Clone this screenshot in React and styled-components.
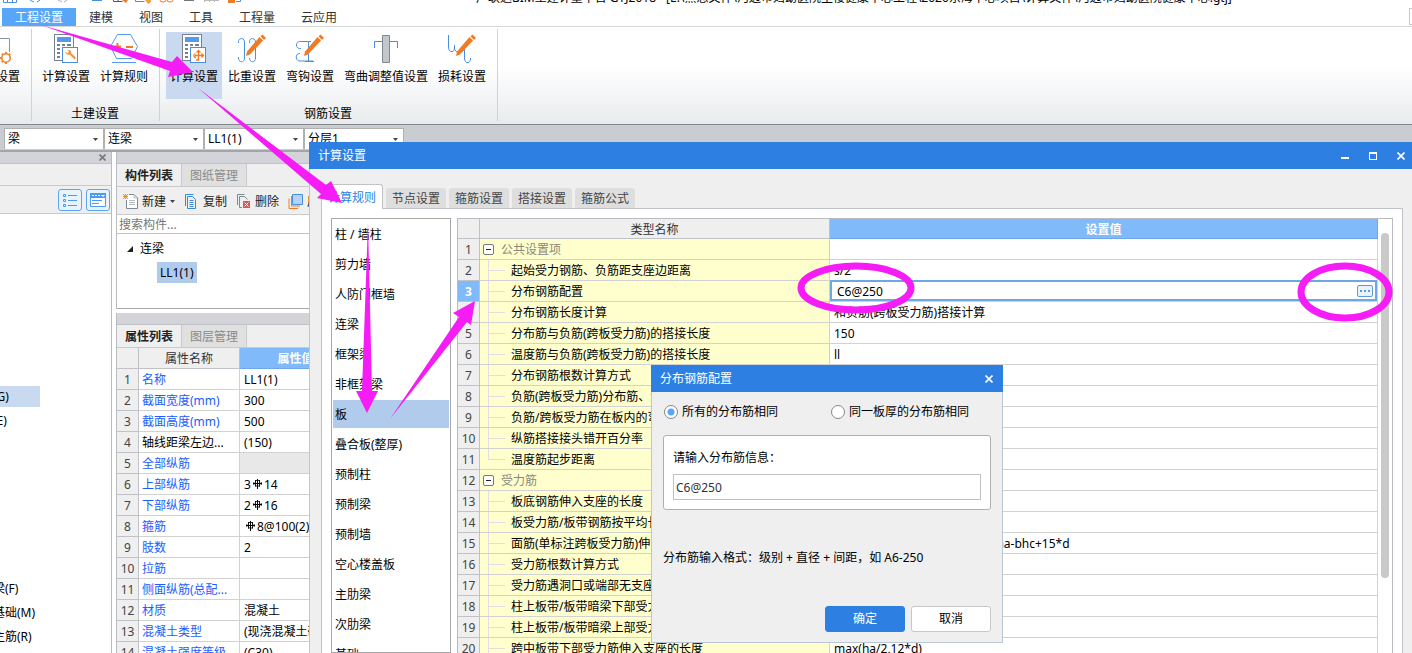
import React, { useState } from 'react';
import styled, { createGlobalStyle } from 'styled-components';

const MENUS = ['工程设置', '建模', '视图', '工具', '工程量', '云应用'];

const COMPONENT_TYPES = [
  '柱 / 墙柱', '剪力墙', '人防门框墙', '连梁', '框架梁', '非框架梁', '板', '叠合板(整厚)',
  '预制柱', '预制梁', '预制墙', '空心楼盖板', '主肋梁', '次肋梁', '基础',
];

const RULES = [
  { name: '公共设置项', group: true },
  { name: '起始受力钢筋、负筋距支座边距离', value: 's/2' },
  { name: '分布钢筋配置', value: 'C6@250', editing: true },
  { name: '分布钢筋长度计算', value: '和负筋(跨板受力筋)搭接计算' },
  { name: '分布筋与负筋(跨板受力筋)的搭接长度', value: '150' },
  { name: '温度筋与负筋(跨板受力筋)的搭接长度', value: 'll' },
  { name: '分布钢筋根数计算方式', value: '' },
  { name: '负筋(跨板受力筋)分布筋、温度筋是否带弯勾', value: '' },
  { name: '负筋/跨板受力筋在板内的弯折长度', value: '' },
  { name: '纵筋搭接接头错开百分率', value: '' },
  { name: '温度筋起步距离', value: '', last: true },
  { name: '受力筋', group: true },
  { name: '板底钢筋伸入支座的长度', value: '' },
  { name: '板受力筋/板带钢筋按平均长度计算', value: '' },
  { name: '面筋(单标注跨板受力筋)伸入支座的锚固长度', value: '能直锚就直锚,否则按公式计算:ha-bhc+15*d' },
  { name: '受力筋根数计算方式', value: '' },
  { name: '受力筋遇洞口或端部无支座时的弯折长度', value: '' },
  { name: '柱上板带/板带暗梁下部受力筋伸入支座的长度', value: '' },
  { name: '柱上板带/板带暗梁上部受力筋伸入支座的长度', value: '' },
  { name: '跨中板带下部受力筋伸入支座的长度', value: 'max(ha/2,12*d)' },
];

const PROPERTIES = [
  { name: '名称', value: 'LL1(1)' },
  { name: '截面宽度(mm)', value: '300' },
  { name: '截面高度(mm)', value: '500' },
  { name: '轴线距梁左边...', value: '(150)', plain: true },
  { name: '全部纵筋', value: '', disabled: true },
  { name: '上部纵筋', value: <>3<Rebar />14</> },
  { name: '下部纵筋', value: <>2<Rebar />16</> },
  { name: '箍筋', value: <><Rebar />8@100(2)</> },
  { name: '肢数', value: '2' },
  { name: '拉筋', value: '' },
  { name: '侧面纵筋(总配...', value: '' },
  { name: '材质', value: '混凝土' },
  { name: '混凝土类型', value: '(现浇混凝土碎石)' },
  { name: '混凝土强度等级', value: '(C30)' },
];

export default function App() {
  return (
    <>
      <GlobalStyle />
      <Page>
        <TitleBar>
          <QuickAccessIcons />
          <WindowTitle>
            广联达BIM土建计量平台 GTJ2018 - [E:\熊思文件\河边市妇幼医院主楼健康中心工程\2020东海中心项目\计算文件\河边市妇幼医院健康中心.gtj]
          </WindowTitle>
        </TitleBar>
        <MenuBar>
          {MENUS.map((menu, i) => <MenuTab key={menu} $active={i === 0}>{menu}</MenuTab>)}
          <MenuEdge />
        </MenuBar>
        <Ribbon />
        <ComboBar>
          <Combo label="构件类别" value="梁" />
          <Combo label="构件类型" value="连梁" />
          <Combo label="构件" value="LL1(1)" />
          <Combo label="分层" value="分层1" />
        </ComboBar>
        <Workspace>
          <NavigationPanel />
          <SidePanels>
            <ComponentPanel />
            <PropertyPanel />
          </SidePanels>
        </Workspace>
        <SettingsWindow />
        <Annotations />
      </Page>
    </>
  );
}

function Ribbon() {
  return (
    <RibbonBar>
      <RibbonGroup $clipped>
        <RibbonItems>
          <RibbonItem><PageGearIcon />比重设置</RibbonItem>
        </RibbonItems>
      </RibbonGroup>
      <RibbonGroup>
        <RibbonItems>
          <RibbonItem><CalculatorIcon badge="wrench" />计算设置</RibbonItem>
          <RibbonItem><HexagonIcon />计算规则</RibbonItem>
        </RibbonItems>
        <GroupLabel>土建设置</GroupLabel>
      </RibbonGroup>
      <RibbonGroup>
        <RibbonItems>
          <RibbonItem $active><CalculatorIcon badge="rebar" />计算设置</RibbonItem>
          <RibbonItem><WeightIcon />比重设置</RibbonItem>
          <RibbonItem><HookIcon />弯钩设置</RibbonItem>
          <RibbonItem><BendIcon />弯曲调整值设置</RibbonItem>
          <RibbonItem><LossIcon />损耗设置</RibbonItem>
        </RibbonItems>
        <GroupLabel>钢筋设置</GroupLabel>
      </RibbonGroup>
    </RibbonBar>
  );
}

function Combo({ label, value }) {
  return (
    <ComboBox>
      <ComboSelect aria-label={label} defaultValue={value}>
        <option>{value}</option>
      </ComboSelect>
      <Caret />
    </ComboBox>
  );
}

function NavigationPanel() {
  return (
    <NavPanel>
      <PanelGrip>
        <GripClose aria-label="关闭">
          <svg width="7" height="7" viewBox="0 0 7 7"><path d="M0.5 0.5l6 6M6.5 0.5l-6 6" stroke="#777" strokeWidth="1.6" /></svg>
        </GripClose>
      </PanelGrip>
      <NavSpacer />
      <NavTools>
        <NavToolButton aria-label="列表">
          <svg width="14" height="14" viewBox="0 0 14 14" fill="none" stroke="#4a9bf5">
            <path d="M5 2.5h9M5 7.5h9M5 12.5h9" />
            <path d="M0.5 1.5h2v2h-2zM0.5 6.5h2v2h-2zM0.5 11.5h2v2h-2z" />
          </svg>
        </NavToolButton>
        <NavToolButton aria-label="面板">
          <svg width="16" height="14" viewBox="0 0 16 14" fill="none">
            <path d="M0.5 0.5h15v13h-15z" fill="#fff" stroke="#4a9bf5" />
            <path d="M0 0h16v5H0z" fill="#4a9bf5" />
            <path d="M2 2.500h2M5 2.500h2M8 2.500h2" stroke="#fff" />
            <path d="M11 2h4l-2 2z" fill="#fff" />
            <path d="M2 7.500h10M2 10.500h7" stroke="#4a9bf5" />
          </svg>
        </NavToolButton>
      </NavTools>
      <NavTree>
        <NavItem $selected>(G)</NavItem>
        <NavItem>(E)</NavItem>
      </NavTree>
      <NavTree $lower>
        <NavItem>梁(F)</NavItem>
        <NavItem>基础(M)</NavItem>
        <NavItem>主筋(R)</NavItem>
      </NavTree>
    </NavPanel>
  );
}

function ComponentPanel() {
  return (
    <Panel>
      <PanelGrip />
      <PanelTabs>
        <PanelTab $active>构件列表</PanelTab>
        <PanelTab>图纸管理</PanelTab>
      </PanelTabs>
      <Toolbar>
        <ToolButton><NewIcon />新建<Caret /></ToolButton>
        <ToolButton><CopyIcon />复制</ToolButton>
        <ToolButton><DeleteIcon />删除</ToolButton>
        <ToolButton><LayersIcon />层间复制</ToolButton>
      </Toolbar>
      <SearchInput aria-label="搜索构件" placeholder="搜索构件..." />
      <ComponentTree>
        <TreeParent>
          <svg width="6" height="6" viewBox="0 0 6 6"><path d="M6 0v6H0z" fill="#222" /></svg>
          连梁
        </TreeParent>
        <TreeChild>LL1(1)</TreeChild>
      </ComponentTree>
    </Panel>
  );
}

function PropertyPanel() {
  return (
    <Panel>
      <PanelGrip />
      <PanelTabs>
        <PanelTab $active>属性列表</PanelTab>
        <PanelTab>图层管理</PanelTab>
      </PanelTabs>
      <Table>
        <colgroup>
          <IndexCol />
          <PropertyCol />
          <col />
        </colgroup>
        <thead>
          <tr>
            <HeadCell $tall />
            <HeadCell $tall>属性名称</HeadCell>
            <HeadCell $tall $active>属性值</HeadCell>
          </tr>
        </thead>
        <tbody>
          {PROPERTIES.map((item, i) => (
            <tr key={item.name}>
              <IndexCell>{i + 1}</IndexCell>
              <PropertyName $plain={item.plain}>{item.name}</PropertyName>
              <ValueCell $disabled={item.disabled}>{item.value}</ValueCell>
            </tr>
          ))}
        </tbody>
      </Table>
    </Panel>
  );
}

function SettingsWindow() {
  return (
    <Window>
      <WindowBar>
        计算设置
        <WindowControls>
          <ControlButton aria-label="最小化">
            <svg width="8" height="8" viewBox="0 0 8 8"><path d="M0 5h8v2H0z" fill="#fff" /></svg>
          </ControlButton>
          <ControlButton aria-label="最大化">
            <svg width="8" height="8" viewBox="0 0 8 8"><path d="M0 0h8v8H0zM1 2v5h6V2z" fill="#fff" fillRule="evenodd" /></svg>
          </ControlButton>
          <ControlButton aria-label="关闭"><CloseGlyph /></ControlButton>
        </WindowControls>
      </WindowBar>
      <WindowBody>
        <WindowTabs>
          <WindowTab $active>计算规则</WindowTab>
          <WindowTab>节点设置</WindowTab>
          <WindowTab>箍筋设置</WindowTab>
          <WindowTab>搭接设置</WindowTab>
          <WindowTab>箍筋公式</WindowTab>
        </WindowTabs>
        <TabPage>
          <TypeList>
            {COMPONENT_TYPES.map((type) => (
              <TypeItem key={type}>
                <TypeButton $selected={type === '板'}>{type}</TypeButton>
              </TypeItem>
            ))}
          </TypeList>
          <RuleTable />
        </TabPage>
      </WindowBody>
      <RebarDialog />
    </Window>
  );
}

function RuleTable() {
  return (
    <RuleFrame>
      <Table>
        <colgroup>
          <IndexCol />
          <RuleCol />
          <col />
        </colgroup>
        <thead>
          <tr>
            <HeadCell />
            <HeadCell>类型名称</HeadCell>
            <HeadCell $active>设置值</HeadCell>
          </tr>
        </thead>
        <tbody>
          {RULES.map((rule, i) => (
            <tr key={rule.name}>
              <IndexCell $active={rule.editing}>{i + 1}</IndexCell>
              <RuleName>
                <RuleNameInner $group={rule.group}>
                  {rule.group ? <GroupToggle /> : <Guide $last={rule.last} />}
                  <RuleText>{rule.name}</RuleText>
                </RuleNameInner>
              </RuleName>
              <ValueCell>
                {rule.editing ? (
                  <CellEditor>
                    <CellInput aria-label={rule.name} defaultValue={rule.value} />
                    <MoreButton aria-label="更多">
                      <svg width="10" height="2" viewBox="0 0 10 2"><path d="M0 0h2v2H0zM4 0h2v2H4zM8 0h2v2H8z" fill="#5a9be0" /></svg>
                    </MoreButton>
                  </CellEditor>
                ) : rule.value}
              </ValueCell>
            </tr>
          ))}
        </tbody>
      </Table>
      <ScrollTrack><ScrollThumb /></ScrollTrack>
    </RuleFrame>
  );
}

function GroupToggle() {
  return (
    <ToggleButton aria-label="折叠">
      <svg width="11" height="11" viewBox="0 0 11 11" fill="none">
        <rect x="0.5" y="0.5" width="10" height="10" rx="1.5" fill="#fff" stroke="#777" />
        <path d="M3 5.500h5" stroke="#222" />
      </svg>
    </ToggleButton>
  );
}

function RebarDialog() {
  const [mode, setMode] = useState('all');
  const [rebar, setRebar] = useState('C6@250');

  return (
    <Dialog role="dialog" aria-label="分布钢筋配置">
      <WindowBar $inset>
        分布钢筋配置
        <WindowControls>
          <ControlButton aria-label="关闭"><CloseGlyph /></ControlButton>
        </WindowControls>
      </WindowBar>
      <DialogBody>
        <RadioRow>
          <RadioLabel>
            <Radio type="radio" name="mode" checked={mode === 'all'} onChange={() => setMode('all')} />
            所有的分布筋相同
          </RadioLabel>
          <RadioLabel>
            <Radio type="radio" name="mode" checked={mode === 'thickness'} onChange={() => setMode('thickness')} />
            同一板厚的分布筋相同
          </RadioLabel>
        </RadioRow>
        <InputGroup>
          <label htmlFor="rebar">请输入分布筋信息：</label>
          <RebarInput id="rebar" value={rebar} onChange={(e) => setRebar(e.target.value)} />
        </InputGroup>
        <Hint>分布筋输入格式：级别 + 直径 + 间距，如 A6-250</Hint>
        <DialogActions>
          <ActionButton $primary>确定</ActionButton>
          <ActionButton>取消</ActionButton>
        </DialogActions>
      </DialogBody>
    </Dialog>
  );
}

function Annotations() {
  return (
    <AnnotationLayer width="1412" height="653" viewBox="0 0 1412 653" aria-hidden="true">
      <g fill="#f51cf5">
        <path d="M41 25L172 62L177 56L193 72L168 77L170 71Z" />
        <path d="M198 88L326 185L331 181L342 203L317 198L321 194Z" />
        <path d="M368 222L372 391H378L367 413L356 391H362Z" />
        <path d="M390 419L459 317L453 313L475 301L471 325L467 322Z" />
      </g>
      <g fill="none" stroke="#f51cf5" strokeWidth="7">
        <ellipse cx="856" cy="288" rx="55" ry="22" />
        <ellipse cx="1345" cy="292" rx="44" ry="26" />
      </g>
    </AnnotationLayer>
  );
}

/* icons */

function QuickAccessIcons() {
  return (
    <svg width="250" height="4" viewBox="0 0 250 4" fill="none">
      <path d="M3.500 0v2.500h13V0M7.500 0v2M12.500 0v2" stroke="#4a90d9" />
      <path d="M30 0l4 2M40 0l-3 2" stroke="#4a90d9" />
      <path d="M58 0l4 2M67 0l-3 2" stroke="#aaa" />
      <path d="M92 0h10v1H92z" fill="#4a90d9" />
      <path d="M113.500 0v1.500h9M118 0v1" stroke="#555" />
      <path d="M122 0h6l-2 3z" fill="#f07b26" />
      <path d="M135.500 0v1.500h9" stroke="#4a90d9" />
      <path d="M145 0h6v2l-3 2z" fill="#f5a13a" />
      <path d="M160 0a3 2 0 0 0 6 0M167 0a3 2 0 0 0 6 0" stroke="#f07b26" />
      <path d="M184 0h10v1h-10z" fill="#777" />
      <path d="M204.500 0v2M209.500 0v2M214.500 0v2M204 .5h15" stroke="#bbb" />
      <path d="M228 0h7v3h-7z" fill="#f07b26" />
      <path d="M236 1.500h4.500V0" stroke="#4a90d9" />
    </svg>
  );
}

function Caret() {
  return <svg width="5" height="3" viewBox="0 0 5 3"><path d="M0 0h5L2.500 3z" fill="#444" /></svg>;
}

function CloseGlyph() {
  return (
    <svg width="8" height="8" viewBox="0 0 8 8">
      <path d="M0.500 0.500l7 7M7.500 0.500l-7 7" stroke="#fff" strokeWidth="1.600" />
    </svg>
  );
}

function Rebar() {
  return (
    <RebarMark width="9" height="10" viewBox="0 0 9 10" fill="none" stroke="#000">
      <path d="M4.500 0v10M0 4.500h9" />
      <path d="M2.500 1v6.500M6.500 1v6.500" strokeWidth="0.9" />
      <path d="M2 1.500h5M2 7h5M0.800 3v3M8.200 3v3" strokeWidth="0.8" />
    </RebarMark>
  );
}

function Pencil() {
  return (
    <>
      <path d="M22.500 3l3.500 3.500L13 20.500l-4 1.500 1-4.500z" fill="#f07b26" />
      <path d="M23.500 2.200l2-1.700 3.500 3.500-2 2z" fill="#f07b26" />
    </>
  );
}

function PageGearIcon() {
  return (
    <svg width="30" height="30" viewBox="0 0 30 30" fill="none">
      <path d="M8.500 19V4.500h20V18M18.500 1v17" stroke="#8795a1" />
      <circle cx="25" cy="24" r="4.200" stroke="#f0852d" strokeWidth="1.600" />
      <path d="M25 18v2M25 28v2M19 24h2M29 24h1M20.800 19.800l1.300 1.300M29.200 19.800l-1.300 1.300M20.800 28.200l1.300-1.300" stroke="#f0852d" strokeWidth="2" />
    </svg>
  );
}

function CalculatorIcon({ badge }) {
  return (
    <svg width="30" height="30" viewBox="0 0 30 30" fill="none">
      <rect x="3.500" y="0.500" width="19" height="26" fill="#fff" stroke="#76838f" />
      <path d="M6 3h14v5H6z" fill="#5599e8" />
      <path d="M6 10h3v2H6zM11 10h3v2h-3zM16 10h4v2h-4zM6 14h3v2H6zM11 14h3v2h-3zM6 18h3v2H6zM6 22h3v2H6z" fill="#76838f" />
      <rect x="11.500" y="13.500" width="15" height="15" fill="#fff" stroke="#4a8fdd" />
      {badge === 'wrench' ? (
        <path d="M14.200 17.500l2.500 2 1.500-2.200-2-1c2.500-1 4.600.700 4 3l4.300 4c1 1-1 2.500-1.700 1.500l-4-4.300c-2.200.800-4.600-.600-4.600-3z" fill="#f5913a" />
      ) : (
        <path d="M19.500 16.500v9.500M17 26h3M16 21.500h8M17.500 18.500l2-2 2 2M16.500 19.500c-2.500 1-2 4 .500 4M22.500 19.500l2 2-2 2" stroke="#f07b26" strokeWidth="1.300" />
      )}
    </svg>
  );
}

function HexagonIcon() {
  return (
    <svg width="30" height="30" viewBox="0 0 30 30" fill="none">
      <path d="M8.500.500h13l7 12-6 12h-15l-6-12zM3 28.500h24" stroke="#5599e8" />
      <path d="M5 12.500h7M8.500 9v7M17 13h7" stroke="#f07b26" strokeWidth="2" />
    </svg>
  );
}

function WeightIcon() {
  return (
    <svg width="30" height="30" viewBox="0 0 30 30" fill="none">
      <path d="M1.500 9V7.500C1.500 3.500 7.500 3.500 7.500 8v16c0 5-6 5-6 0v-1M12.500 9V7.500c0-4 6-4 6 .500v16c0 5-6 5-6 0" stroke="#4a90d9" />
      <Pencil />
    </svg>
  );
}

function HookIcon() {
  return (
    <svg width="30" height="30" viewBox="0 0 30 30" fill="none">
      <path d="M16 7.500H4.500c-4 0-4 7 0 7H6M5 19.500c-5-.500-5 7.500 0 7.500h13M13.500 7v20M10 27.500h9" stroke="#4a90d9" />
      <Pencil />
    </svg>
  );
}

function BendIcon() {
  return (
    <svg width="30" height="30" viewBox="0 0 30 30" fill="none">
      <path d="M3.500 14V7.500h23V14" stroke="#4a8fdd" />
      <path d="M11.500 1.500h7v27h-7z" fill="#c4c7ca" stroke="#7d8994" />
    </svg>
  );
}

function LossIcon() {
  return (
    <svg width="30" height="30" viewBox="0 0 30 30" fill="none">
      <path d="M1.500 1v12c0 6 6 6 6 1v-3M7.500 14c0 5 7 6 10 1v9c0 6 6 6 6 1v-1" stroke="#4a90d9" />
      <Pencil />
    </svg>
  );
}

function NewIcon() {
  return (
    <svg width="15" height="15" viewBox="0 0 15 15" fill="none">
      <path d="M6 .500h5l3.500 3.500v10.500h-11V6" fill="#fff" stroke="#7d8994" />
      <path d="M11 .500V4h3M6 6.500h6M6 8.500h6M6 10.500h6" stroke="#b5bcc3" />
      <path d="M0 0l5 5M5 0L0 5M2.500 0v5M0 2.500h5" stroke="#f5961e" />
    </svg>
  );
}

function CopyIcon() {
  return (
    <svg width="15" height="15" viewBox="0 0 15 15" fill="none">
      <path d="M1.500 12V.500h8M3.500 2.500h5l3 3v9h-8z" stroke="#3d87d8" />
      <path d="M5.500 6.500h4M5.500 8.500h4M5.500 10.500h4M5.500 12.500h4" stroke="#3d87d8" />
    </svg>
  );
}

function DeleteIcon() {
  return (
    <svg width="15" height="15" viewBox="0 0 15 15" fill="none">
      <path d="M1.500 11V.500h7M6 13.500H3.500v-11h5l3 3" stroke="#7d8994" />
      <path d="M7 7h7v7H7z" fill="#d9534f" />
      <path d="M8.500 8.500l4 4M12.500 8.500l-4 4" stroke="#fff" />
    </svg>
  );
}

function LayersIcon() {
  return (
    <svg width="15" height="15" viewBox="0 0 15 15" fill="none">
      <path d="M1 4.500v10h9M3.500 2v10H12" stroke="#f07b26" />
      <path d="M4.500.500h10v10h-10z" fill="#b5d2f5" stroke="#4a8fdd" />
    </svg>
  );
}

/* styles */

const GlobalStyle = createGlobalStyle`
  * {
    box-sizing: border-box;
  }

  body {
    margin: 0;
  }

  body, button, input, select {
    font-family: 'Noto Sans', 'Noto Sans CJK SC', sans-serif;
    font-size: 12px;
    line-height: 16px;
    color: #000;
  }

  button {
    padding: 0;
    border: 0;
    background: none;
  }

  svg {
    flex-shrink: 0;
  }
`;

const Page = styled.div`
  position: relative;
  display: flex;
  flex-direction: column;
  height: 100vh;
  overflow: hidden;
  background: #fff;
  white-space: nowrap;
`;

const TitleBar = styled.header`
  display: flex;
  flex-shrink: 0;
  gap: 226px;
  height: 8px;
  overflow: hidden;
`;

const WindowTitle = styled.span`
  align-self: flex-end;
  padding-bottom: 2px;
`;

const MenuBar = styled.nav`
  display: flex;
  flex-shrink: 0;
  height: 19px;
  padding-left: 2px;
  border-bottom: 1px solid #d5d6d8;
`;

const MenuTab = styled.button`
  padding: 2px 13px 0;
  color: ${(props) => (props.$active ? '#fff' : '#333')};
  background: ${(props) => (props.$active ? '#58a6f8' : 'transparent')};
`;

const MenuEdge = styled.span`
  width: 3px;
  height: 17px;
  margin-left: auto;
  border: 1px solid #c8c8c8;
  border-right: 0;
`;

const RibbonBar = styled.div`
  display: flex;
  flex-shrink: 0;
  height: 98px;
  padding: 2px 0 3px;
  background: linear-gradient(#fff 40%, #e8ebed);
  border-bottom: 1px solid #85898e;
`;

const RibbonGroup = styled.section`
  display: flex;
  flex-direction: column;
  justify-content: space-between;
  align-items: ${(props) => (props.$clipped ? 'flex-end' : 'center')};
  width: ${(props) => (props.$clipped ? '32px' : 'auto')};
  padding: 3px 6px 0 5px;
  overflow: hidden;
  border-right: 1px solid #d0d2d5;
`;

const RibbonItems = styled.div`
  display: flex;
`;

const RibbonItem = styled.button`
  display: flex;
  flex-direction: column;
  align-items: center;
  gap: 5px;
  height: 67px;
  margin: 0 1px;
  padding: 2px 4px 0;
  background: ${(props) => (props.$active ? '#c9d9f0' : 'transparent')};
`;

const GroupLabel = styled.span`
  line-height: 14px;
`;

const ComboBar = styled.div`
  display: flex;
  flex-shrink: 0;
  height: 27px;
  padding: 3px 0 1px 4px;
  background: #c9ccd1;
  border-bottom: 2px solid #a2a5aa;
`;

const ComboBox = styled.div`
  position: relative;
  width: 100px;
  background: #fff;
  border: 1px solid #b0b0b0;
  border-bottom: 0;

  svg {
    position: absolute;
    right: 5px;
    top: 9px;
    pointer-events: none;
  }
`;

const ComboSelect = styled.select`
  appearance: none;
  width: 100%;
  height: 100%;
  padding: 0 3px;
  border: 0;
  background: transparent;
`;

const Workspace = styled.main`
  display: flex;
  flex: 1;
  gap: 4px;
  min-height: 0;
`;

const NavPanel = styled.aside`
  width: 112px;
  overflow: hidden;
  border-right: 1px solid #b8bbc0;
`;

const PanelGrip = styled.div`
  display: flex;
  align-items: center;
  justify-content: flex-end;
  height: 12px;
  padding-right: 5px;
  background: #d3d4d9;
  border-bottom: 1px solid #c0c2c7;
`;

const GripClose = styled.button`
  display: flex;
`;

const NavSpacer = styled.div`
  height: 22px;
  background: #efefef;
  border-bottom: 1px solid #c9cacd;
`;

const NavTools = styled.div`
  display: flex;
  align-items: center;
  justify-content: flex-end;
  gap: 4px;
  height: 28px;
  padding-right: 1px;
  background: #efefef;
  border-bottom: 1px solid #c9cacd;
`;

const NavToolButton = styled.button`
  display: flex;
  align-items: center;
  justify-content: center;
  width: 24px;
  height: 22px;
  border: 1px solid #58a6f8;
  border-radius: 3px;
  background: #e9f3fe;
`;

const NavTree = styled.ul`
  margin: ${(props) => (props.$lower ? '147px' : '172px')} 0 0;
  padding: 0;
  list-style: none;
`;

const NavItem = styled.li`
  width: 40px;
  height: 21px;
  margin-bottom: 3px;
  line-height: 21px;
  text-indent: -7px;
  background: ${(props) => (props.$selected ? '#c9d9f0' : 'transparent')};
`;

const SidePanels = styled.div`
  display: flex;
  flex-direction: column;
  gap: 4px;
  width: 236px;
`;

const Panel = styled.section`
  border-left: 1px solid #b8bbc0;
`;

const PanelTabs = styled.div`
  display: flex;
  height: 23px;
  background: #efefef;
  border-bottom: 1px solid #c9cacd;
`;

const PanelTab = styled.button`
  width: 65px;
  padding-top: 2px;
  color: ${(props) => (props.$active ? '#222' : '#8a8a8a')};
  font-weight: ${(props) => (props.$active ? 'bold' : 'normal')};
  background: ${(props) => (props.$active ? '#efefef' : '#e0e0e0')};
  border-right: 1px solid #c9cacd;
`;

const Toolbar = styled.div`
  display: flex;
  align-items: center;
  gap: 9px;
  height: 28px;
  padding: 2px 0 0 6px;
  overflow: hidden;
  background: #efefef;
  border-bottom: 1px solid #c9cacd;
`;

const ToolButton = styled.button`
  display: flex;
  align-items: center;
  gap: 4px;
  color: #222;
`;

const SearchInput = styled.input`
  display: block;
  width: 100%;
  height: 19px;
  padding: 0 2px;
  border: 0;
  border-bottom: 1px solid #c0c2c7;
  outline: 0;

  &::placeholder {
    color: #777;
  }
`;

const ComponentTree = styled.div`
  height: 75px;
  padding: 3px 0 0 10px;
  border-bottom: 1px solid #a8a8a8;
`;

const TreeParent = styled.div`
  display: flex;
  align-items: center;
  gap: 7px;
  height: 24px;
`;

const TreeChild = styled.span`
  display: inline-block;
  margin: 1px 0 0 30px;
  padding: 0 3px;
  line-height: 21px;
  background: #b0cbec;
`;

const Table = styled.table`
  flex: 1;
  width: 100%;
  table-layout: fixed;
  border-collapse: separate;
  border-spacing: 0;
`;

const IndexCol = styled.col`
  width: 22px;
`;

const PropertyCol = styled.col`
  width: 101px;
`;

const RuleCol = styled.col`
  width: 350px;
`;

const HeadCell = styled.th`
  height: ${(props) => (props.$tall ? '21px' : '20px')};
  padding: 2px 0 0;
  color: ${(props) => (props.$active ? '#fff' : '#333')};
  font-weight: ${(props) => (props.$active ? 'bold' : 'normal')};
  background: ${(props) => (props.$active ? '#81bafa' : '#efefef')};
  border: 0 solid ${(props) => (props.$active ? '#6ba8e5' : '#c0c2c7')};
  border-width: 0 1px 1px 0;
`;

const Cell = styled.td`
  height: 21px;
  padding: 2px 0 0;
  overflow: hidden;
  border-right: 1px solid #d2d2d2;
  border-bottom: 1px solid #d2d2d2;
`;

const IndexCell = styled(Cell)`
  text-align: center;
  color: ${(props) => (props.$active ? '#fff' : '#444')};
  font-weight: ${(props) => (props.$active ? 'bold' : 'normal')};
  background: ${(props) => (props.$active ? '#81bafa' : '#efefef')};
  border-color: #c0c2c7;
`;

const PropertyName = styled(Cell)`
  padding-left: 3px;
  color: ${(props) => (props.$plain ? '#000' : '#1a5cff')};
`;

const ValueCell = styled(Cell)`
  position: relative;
  padding-left: 4px;
  overflow: visible;
  background: ${(props) => (props.$disabled ? '#e8e8e8' : '#fff')};
`;

const RebarMark = styled.svg`
  margin: 0 2px;
`;

const Window = styled.section`
  position: absolute;
  inset: 142px 0 0 309px;
  display: flex;
  flex-direction: column;
  overflow: hidden;
  background: #efefef;
`;

const WindowBar = styled.header`
  display: flex;
  flex-shrink: 0;
  align-items: center;
  justify-content: space-between;
  height: 27px;
  padding: 0 ${(props) => (props.$inset ? '3px' : '0')} 0 9px;
  color: #fff;
  background: #2d7fe2;
`;

const WindowControls = styled.div`
  display: flex;
  gap: 6px;
`;

const ControlButton = styled.button`
  display: flex;
  align-items: center;
  justify-content: center;
  width: 22px;
  height: 27px;
`;

const WindowBody = styled.div`
  display: flex;
  flex: 1;
  flex-direction: column;
  min-height: 0;
  padding: 15px 9px 0 11px;
  border-left: 1px solid #bcc8d8;
`;

const WindowTabs = styled.div`
  display: flex;
  flex-shrink: 0;
  align-items: flex-end;
  gap: 3px;
  height: 25px;
`;

const WindowTab = styled.button`
  position: relative;
  width: ${(props) => (props.$active ? '62px' : '60px')};
  height: ${(props) => (props.$active ? '25px' : '20px')};
  margin-bottom: ${(props) => (props.$active ? '0' : '1px')};
  padding-top: 2px;
  color: ${(props) => (props.$active ? '#2d7fe2' : '#444')};
  background: ${(props) => (props.$active ? '#fff' : '#dedede')};
  border: ${(props) => (props.$active ? '1px solid #c0c2c7' : '0')};
  border-bottom: 0;
  border-radius: 3px 3px 0 0;
`;

const TabPage = styled.div`
  display: flex;
  flex: 1;
  gap: 6px;
  min-height: 0;
  margin-top: -1px;
  padding: 9px 9px 0;
  background: #fff;
  border: 1px solid #c0c2c7;
  border-bottom: 0;
`;

const TypeList = styled.ul`
  flex-shrink: 0;
  width: 120px;
  margin: 0;
  padding: 1px 1px 0;
  overflow: hidden;
  list-style: none;
  border: 1px solid #a8a8a8;
`;

const TypeItem = styled.li`
  height: 30px;
`;

const TypeButton = styled.button`
  width: 100%;
  height: 28px;
  padding: 2px 0 0 2px;
  text-align: left;
  background: ${(props) => (props.$selected ? '#b0cbec' : 'transparent')};
`;

const RuleFrame = styled.div`
  display: flex;
  flex: 1;
  align-items: flex-start;
  min-width: 0;
  overflow: hidden;
  border: 1px solid #b8bbc0;
  border-bottom: 0;
`;

const RuleName = styled(Cell)`
  padding: 0;
  background: #ffffce;
`;

const RuleNameInner = styled.div`
  display: flex;
  align-items: center;
  gap: ${(props) => (props.$group ? '7px' : '6px')};
  height: 20px;
  color: ${(props) => (props.$group ? '#8a8a7a' : '#000')};
`;

const RuleText = styled.span`
  padding-top: 2px;
`;

const ToggleButton = styled.button`
  display: flex;
  margin-left: 3px;
`;

const Guide = styled.span`
  flex-shrink: 0;
  width: 17px;
  height: 20px;
  margin-left: 8px;
  background:
    linear-gradient(#dedee4, #dedee4) 0 0 / 1px ${(props) => (props.$last ? '10px' : '20px')} no-repeat,
    linear-gradient(#dedee4, #dedee4) 0 10px / 17px 1px no-repeat;
`;

const CellEditor = styled.div`
  position: absolute;
  inset: -1px 0 0 0;
  display: flex;
  align-items: center;
  padding-right: 2px;
  background: #fff;
  border: 2px solid #6ba8e5;
`;

const CellInput = styled.input`
  flex: 1;
  min-width: 0;
  height: 17px;
  padding: 1px 5px 0;
  border: 0;
  outline: 0;
`;

const MoreButton = styled.button`
  display: flex;
  align-items: center;
  justify-content: center;
  width: 16px;
  height: 12px;
  border: 1px solid #5a9be0;
  border-radius: 2px;
  background: #e9f3fe;
`;

const ScrollTrack = styled.div`
  width: 14px;
  padding: 14px 3px 0;
`;

const ScrollThumb = styled.div`
  height: 345px;
  border-radius: 4px;
  background: #c9c9c9;
`;

const Dialog = styled.section`
  position: absolute;
  left: 342px;
  top: 223px;
  width: 352px;
  background: #efefef;
  box-shadow: inset 0 0 0 1px #b9c6d6;
`;

const DialogBody = styled.div`
  padding: 12px 12px 11px;
`;

const RadioRow = styled.div`
  display: grid;
  grid-template-columns: 167px 1fr;
`;

const RadioLabel = styled.label`
  display: flex;
  align-items: center;
  gap: 4px;
`;

const Radio = styled.input`
  appearance: none;
  width: 14px;
  height: 14px;
  margin: 0 0 0 1px;
  border: 1px solid #888;
  border-radius: 50%;
  background: #fff;

  &:checked {
    background: radial-gradient(circle, #58a6f8 3px, #fff 4px);
  }
`;

const InputGroup = styled.div`
  display: flex;
  flex-direction: column;
  gap: 8px;
  margin-top: 15px;
  padding: 14px 9px 9px;
  background: #fff;
  border: 1px solid #b0b0b0;
  border-radius: 3px;
`;

const RebarInput = styled.input`
  width: 100%;
  height: 26px;
  padding: 0 2px;
  color: #333;
  border: 1px solid #c0c2c7;
`;

const Hint = styled.p`
  margin: 40px 0;
`;

const DialogActions = styled.div`
  display: flex;
  justify-content: flex-end;
  gap: 6px;
`;

const ActionButton = styled.button`
  width: 80px;
  height: 26px;
  color: ${(props) => (props.$primary ? '#fff' : '#000')};
  background: ${(props) => (props.$primary ? '#2d7fe2' : '#fff')};
  border: 1px solid ${(props) => (props.$primary ? '#2d7fe2' : '#c8c8c8')};
  border-radius: 3px;
`;

const AnnotationLayer = styled.svg`
  position: absolute;
  left: 0;
  top: 0;
  pointer-events: none;
`;
